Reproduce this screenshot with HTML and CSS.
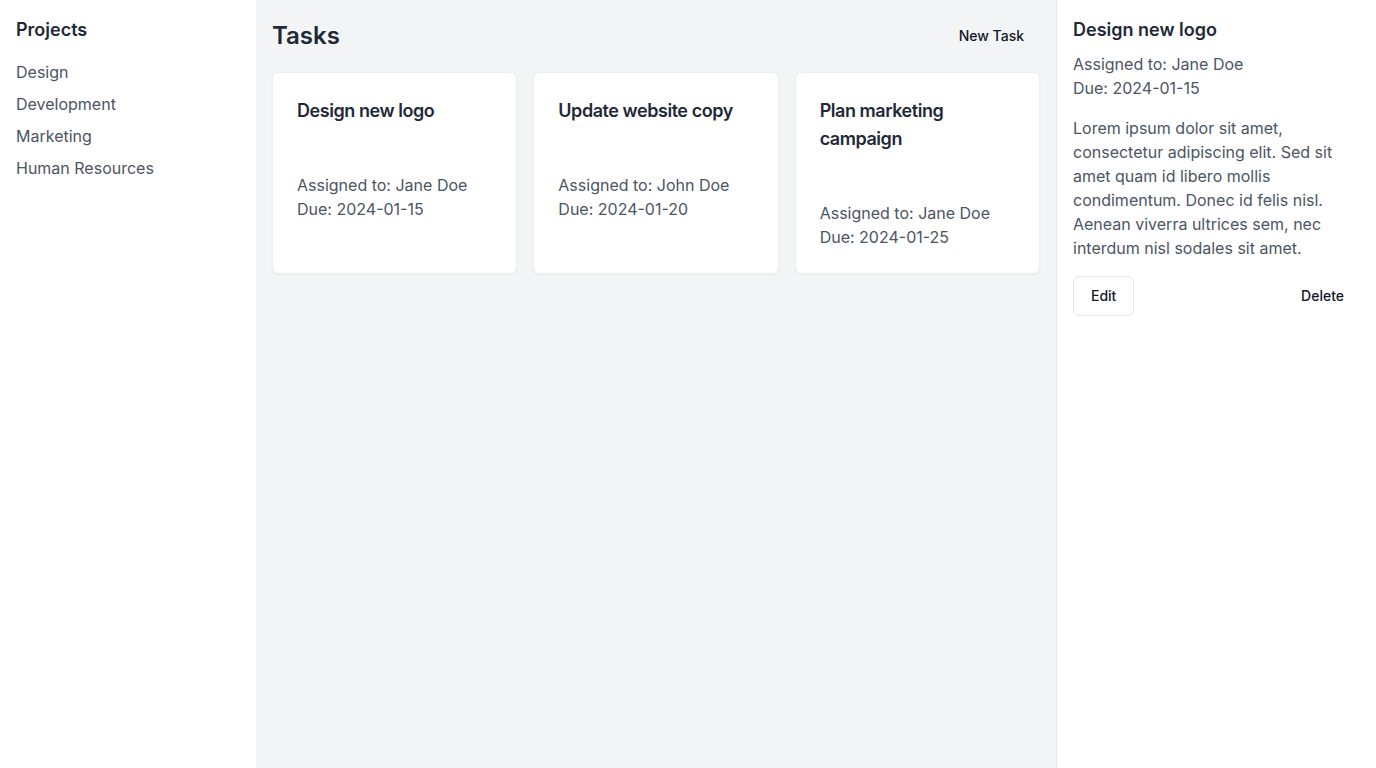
FILE: index.html
```html
<!DOCTYPE html>
<html lang="en">
<head>
<meta charset="utf-8">
<title>Tasks</title>
<link rel="stylesheet" href="styles.css">
</head>
<body>
<div class="app">
  <aside class="sidebar">
    <h2 class="sidebar-title">Projects</h2>
    <ul class="project-list">
      <li><a href="#">Design</a></li>
      <li><a href="#">Development</a></li>
      <li><a href="#">Marketing</a></li>
      <li><a href="#">Human Resources</a></li>
    </ul>
  </aside>
  <main class="main">
    <div class="main-header">
      <h1 class="main-title">Tasks</h1>
      <button class="btn-plain">New Task</button>
    </div>
    <div class="cards">
      <div class="card">
        <h3 class="card-title">Design new logo</h3>
        <p class="card-meta">Assigned to: Jane Doe<br>Due: 2024-01-15</p>
      </div>
      <div class="card">
        <h3 class="card-title">Update website copy</h3>
        <p class="card-meta">Assigned to: John Doe<br>Due: 2024-01-20</p>
      </div>
      <div class="card">
        <h3 class="card-title">Plan marketing campaign</h3>
        <p class="card-meta">Assigned to: Jane Doe<br>Due: 2024-01-25</p>
      </div>
    </div>
  </main>
  <aside class="detail">
    <h2 class="detail-title">Design new logo</h2>
    <p class="detail-meta">Assigned to: Jane Doe<br>Due: 2024-01-15</p>
    <p class="detail-desc">Lorem ipsum dolor sit amet, consectetur adipiscing elit. Sed sit amet quam id libero mollis condimentum. Donec id felis nisl. Aenean viverra ultrices sem, nec interdum nisl sodales sit amet.</p>
    <div class="detail-actions">
      <button class="btn-outline">Edit</button>
      <button class="btn-plain">Delete</button>
    </div>
  </aside>
</div>
</body>
</html>
```
FILE: styles.css
```css
* { box-sizing: border-box; }
html, body { margin: 0; padding: 0; height: 100%; }
body {
  font-family: Inter, "Noto Sans", sans-serif;
  color: #1f2937;
  background: #ffffff;
}
.app {
  display: flex;
  height: 100vh;
}
.sidebar {
  width: 256px;
  flex: none;
  background: #ffffff;
  padding: 16px;
}
.sidebar-title {
  margin: 0 0 16px;
  font-size: 18px;
  line-height: 28px;
  font-weight: 600;
  color: #1f2937;
}
.project-list {
  list-style: none;
  margin: 0;
  padding: 0;
  display: flex;
  flex-direction: column;
  gap: 8px;
}
.project-list a {
  display: block;
  font-size: 16px;
  line-height: 24px;
  color: #4b5563;
  text-decoration: none;
}
.main {
  flex: 1;
  background: #f3f4f6;
  padding: 16px;
}
.main-header {
  display: flex;
  align-items: center;
  justify-content: space-between;
  margin-bottom: 16px;
}
.main-title {
  margin: 0;
  font-size: 24px;
  line-height: 32px;
  font-weight: 600;
  color: #1f2937;
}
.btn-plain, .btn-outline {
  font-family: inherit;
  font-size: 14px;
  line-height: 20px;
  font-weight: 500;
  color: #111827;
  padding: 10px 16px;
  border-radius: 6px;
  background: transparent;
  border: 0;
  cursor: pointer;
}
.btn-outline {
  padding: 9px 17px;
  border: 1px solid #e5e7eb;
  background: #ffffff;
}
.cards {
  display: grid;
  grid-template-columns: repeat(3, 1fr);
  gap: 16px;
}
.card {
  background: #ffffff;
  border: 1px solid #eceef1;
  border-radius: 6px;
  padding: 24px;
  box-shadow: 0 1px 2px rgba(0,0,0,0.05);
}
.card-title {
  margin: 0 0 48px;
  font-size: 18px;
  line-height: 28px;
  font-weight: 600;
  letter-spacing: -0.025em;
  color: #1f2937;
}
.card-meta {
  margin: 0;
  font-size: 16px;
  line-height: 24px;
  color: #4b5563;
}
.detail {
  width: 320px;
  flex: none;
  background: #ffffff;
  border-left: 1px solid #e5e7eb;
  padding: 16px;
}
.detail-title {
  margin: 0 0 8px;
  font-size: 18px;
  line-height: 28px;
  font-weight: 600;
  color: #1f2937;
}
.detail-meta, .detail-desc {
  margin: 0 0 16px;
  font-size: 16px;
  line-height: 24px;
  color: #4b5563;
}
.detail-actions {
  display: flex;
  justify-content: space-between;
  align-items: center;
}
```
